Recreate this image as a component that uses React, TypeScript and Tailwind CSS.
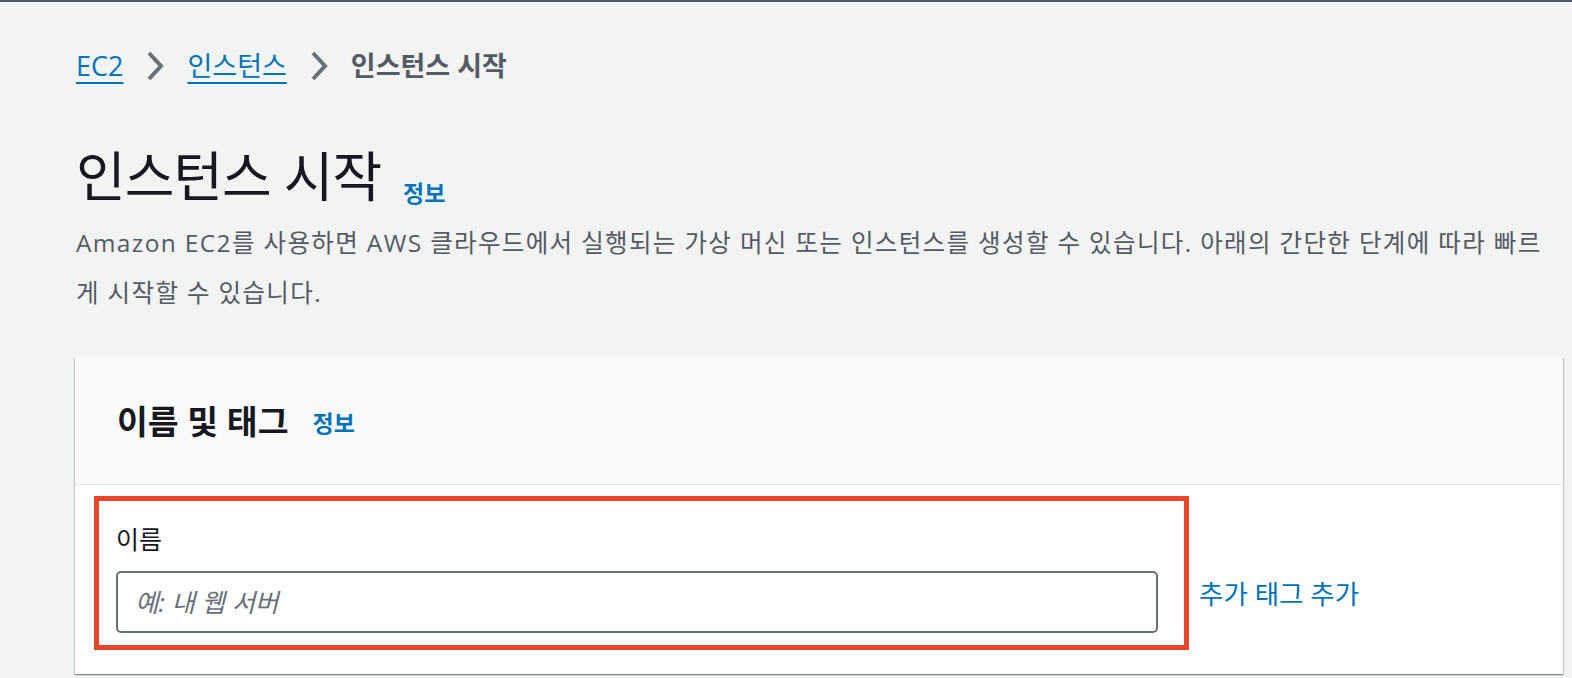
import React from 'react';

const font = { fontFamily: '"Open Sans", "Noto Sans CJK KR", sans-serif' };

function Chevron() {
  return (
    <svg className="w-[18px] h-[30px] mx-[23px]" viewBox="0 0 18 30" fill="none">
      <path d="M3 2l12 13L3 28" stroke="#687078" strokeWidth={4} />
    </svg>
  );
}

export default function App() {
  return (
    <div
      className="w-[1572px] h-[678px] overflow-hidden bg-[#f2f3f3] border-t-2 border-[#545b64] text-[#16191f]"
      style={font}
    >
      <div className="pl-[76px] pr-[9px]">
        {/* Breadcrumb */}
        <nav className="flex items-center h-[32px] mt-[48px] text-[27px] leading-[32px]">
          <span className="text-[#0073bb] underline underline-offset-[6px] decoration-[2px]">EC2</span>
          <Chevron />
          <span className="text-[#0073bb] underline underline-offset-[6px] decoration-[2px]">인스턴스</span>
          <Chevron />
          <span className="text-[#545b64] font-bold">인스턴스 시작</span>
        </nav>

        {/* Heading */}
        <div className="flex items-end mt-[64px] h-[60px]">
          <h1 className="text-[54px] leading-[60px] font-normal tracking-[-1px]">인스턴스 시작</h1>
          <span className="ml-[22px] mb-[-4px] text-[23px] font-bold text-[#0073bb]">정보</span>
        </div>
        <p className="mt-[12px] text-[24.5px] leading-[50px] tracking-[1.35px] text-[#545b64] pr-[10px]">
          Amazon EC2를 사용하면 AWS 클라우드에서 실행되는 가상 머신 또는 인스턴스를 생성할 수 있습니다. 아래의 간단한 단계에 따라 빠르게 시작할 수 있습니다.
        </p>

        {/* Card */}
        <div className="mt-[39px] -ml-px bg-white shadow-[0_1px_1px_0_rgba(0,28,36,0.3),1px_1px_1px_0_rgba(0,28,36,0.15),-1px_1px_1px_0_rgba(0,28,36,0.15)]">
          <div className="h-[128px] bg-[#fafafa] border-b border-[#eaeded] flex items-center pl-[42px]">
            <h2 className="text-[33.5px] font-bold leading-[40px]">이름 및 태그</h2>
            <span className="ml-[24px] mt-[6px] text-[23px] font-bold text-[#0073bb]">정보</span>
          </div>
          <div className="h-[189px] flex items-start pt-[11px] pl-[19px]">
            <div className="w-[1095px] h-[154px] border-[5px] border-[#e9452b] pl-[17px] pt-[22px]">
              <label className="block text-[25px] leading-[32px] text-[#16191f]">이름</label>
              <div className="mt-[16px] w-[1042px] h-[62px] border-2 border-[#687078] rounded-[5px] bg-white flex items-center px-[17px]">
                <span className="text-[25.5px] italic text-[#687078]">예: 내 웹 서버</span>
              </div>
            </div>
            <span className="ml-[10px] mt-[82px] text-[26.5px] leading-[32px] text-[#0073bb]">추가 태그 추가</span>
          </div>
        </div>
      </div>
    </div>
  );
}
